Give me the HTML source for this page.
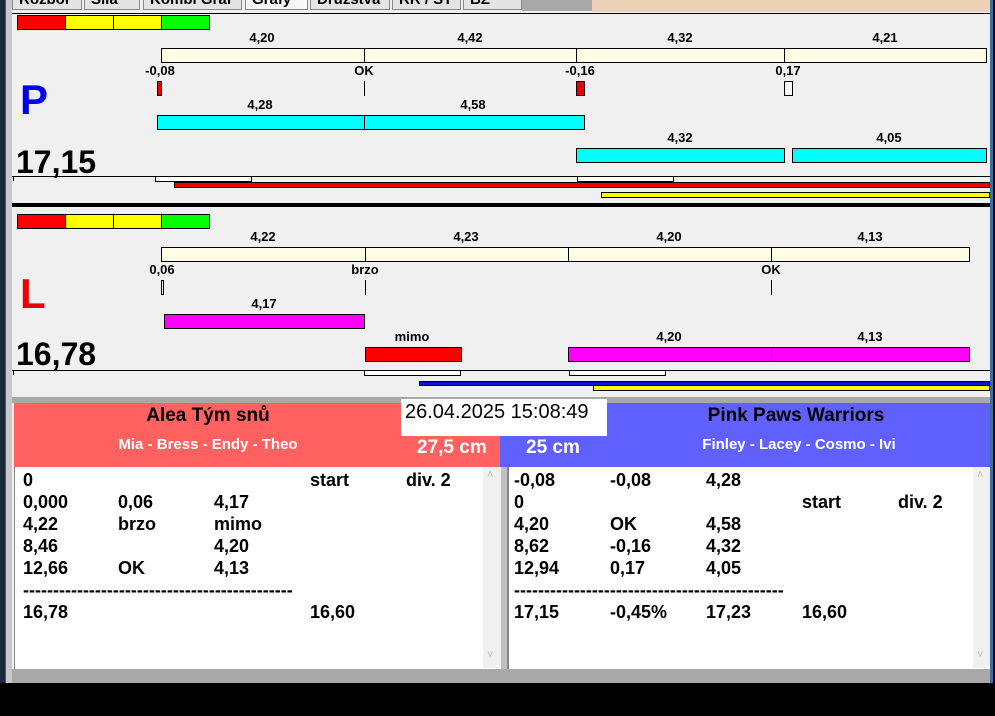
<!DOCTYPE html>
<html><head><meta charset="utf-8"><style>
*{margin:0;padding:0;box-sizing:border-box}
body{width:995px;height:716px;background:#000;position:relative;overflow:hidden;font-family:"Liberation Sans",Arial,sans-serif}
div,span{position:absolute}
.b{border:1px solid #000}
.l{font-weight:bold;font-size:13px;color:#000;transform:translateX(-50%);white-space:nowrap;line-height:14px}
.t{font-weight:bold;font-size:18px;line-height:22px;white-space:nowrap}
.tab{top:-10px;height:20px;background:#e4e4e4;border:1px solid #888;font-size:15px;font-weight:bold;padding:0 6px;line-height:17px;overflow:hidden}
</style></head><body>
<div style="left:0;top:0;width:5px;height:683px;background:#1a2a3a"></div>
<div style="left:5px;top:0;width:986px;height:683px;background:#f0f0f0"></div>
<div style="left:5px;top:0;width:7px;height:683px;background:#c8c8c8;border-left:1px solid #555"></div>
<div style="left:990px;top:0;width:3px;height:683px;background:#3a6ea5"></div>
<div style="left:12px;top:0;width:978px;height:12px;background:#f0f0f0"></div>
<div class="tab" style="left:12px;width:70px">Rozbor</div>
<div class="tab" style="left:84px;width:56px">Síla</div>
<div class="tab" style="left:143px;width:99px">Kombi Graf</div>
<div class="tab" style="left:245px;width:63px;background:#f8f8f8">Grafy</div>
<div class="tab" style="left:310px;width:80px">Družstva</div>
<div class="tab" style="left:392px;width:69px">RR / ST</div>
<div class="tab" style="left:463px;width:59px">BZ</div>
<div style="left:522px;top:0;width:70px;height:11px;background:#a8a8a8"></div>
<div style="left:592px;top:0;width:398px;height:12px;background:#ecd3b8"></div>
<div style="left:12px;top:13px;width:978px;height:1px;background:#000"></div>
<div class="b" style="left:17px;top:15px;width:49px;height:15px;background:#f00"></div>
<div class="b" style="left:65px;top:15px;width:49px;height:15px;background:#ff0"></div>
<div class="b" style="left:113px;top:15px;width:49px;height:15px;background:#ff0"></div>
<div class="b" style="left:161px;top:15px;width:49px;height:15px;background:#0f0"></div>

<div class="b" style="left:161px;top:48px;width:204px;height:15px;background:#fffde6"></div>
<div class="b" style="left:364px;top:48px;width:213px;height:15px;background:#fffde6"></div>
<div class="b" style="left:576px;top:48px;width:209px;height:15px;background:#fffde6"></div>
<div class="b" style="left:784px;top:48px;width:203px;height:15px;background:#fffde6"></div>
<span class="l" style="left:262px;top:31px">4,20</span>
<span class="l" style="left:470px;top:31px">4,42</span>
<span class="l" style="left:680px;top:31px">4,32</span>
<span class="l" style="left:885px;top:31px">4,21</span>
<span class="l" style="left:160px;top:64px">-0,08</span>
<span class="l" style="left:364px;top:64px">OK</span>
<span class="l" style="left:580px;top:64px">-0,16</span>
<span class="l" style="left:788px;top:64px">0,17</span>
<div class="b" style="left:157px;top:81px;width:5px;height:15px;background:#e00"></div>
<div style="left:364px;top:81px;width:1px;height:15px;background:#000"></div>
<div class="b" style="left:576px;top:81px;width:9px;height:15px;background:#e00"></div>
<div class="b" style="left:784px;top:81px;width:9px;height:15px;background:#fff"></div>
<span style="left:20px;top:76px;font-size:42px;font-weight:bold;color:#0000ee;line-height:48px">P</span>
<span class="l" style="left:260px;top:98px">4,28</span>
<span class="l" style="left:473px;top:98px">4,58</span>
<div class="b" style="left:157px;top:115px;width:208px;height:15px;background:#0ff"></div>
<div class="b" style="left:364px;top:115px;width:221px;height:15px;background:#0ff"></div>
<span class="l" style="left:680px;top:131px">4,32</span>
<span class="l" style="left:889px;top:131px">4,05</span>
<div class="b" style="left:576px;top:148px;width:209px;height:15px;background:#0ff"></div>
<div class="b" style="left:792px;top:148px;width:195px;height:15px;background:#0ff"></div>
<span style="left:16px;top:144px;font-size:32px;font-weight:bold;line-height:36px">17,15</span>
<div style="left:12px;top:176px;width:978px;height:1px;background:#000"></div>
<div style="left:13px;top:176px;width:1px;height:5px;background:#000"></div>
<div class="b" style="left:155px;top:176px;width:97px;height:6px;background:#fff"></div>
<div class="b" style="left:577px;top:176px;width:97px;height:6px;background:#fff"></div>
<div class="b" style="left:174px;top:182px;width:816px;height:6px;background:#e00"></div>
<div class="b" style="left:601px;top:192px;width:389px;height:6px;background:#ff0"></div>
<div style="left:12px;top:203px;width:978px;height:4px;background:#000"></div>
<div class="b" style="left:17px;top:214px;width:49px;height:15px;background:#f00"></div>
<div class="b" style="left:65px;top:214px;width:49px;height:15px;background:#ff0"></div>
<div class="b" style="left:113px;top:214px;width:49px;height:15px;background:#ff0"></div>
<div class="b" style="left:161px;top:214px;width:49px;height:15px;background:#0f0"></div>
<div class="b" style="left:161px;top:247px;width:205px;height:15px;background:#fffde6"></div>
<div class="b" style="left:365px;top:247px;width:204px;height:15px;background:#fffde6"></div>
<div class="b" style="left:568px;top:247px;width:204px;height:15px;background:#fffde6"></div>
<div class="b" style="left:771px;top:247px;width:199px;height:15px;background:#fffde6"></div>
<span class="l" style="left:263px;top:230px">4,22</span>
<span class="l" style="left:466px;top:230px">4,23</span>
<span class="l" style="left:669px;top:230px">4,20</span>
<span class="l" style="left:870px;top:230px">4,13</span>
<span class="l" style="left:162px;top:263px">0,06</span>
<span class="l" style="left:365px;top:263px">brzo</span>
<span class="l" style="left:771px;top:263px">OK</span>
<div class="b" style="left:161px;top:280px;width:3px;height:15px;background:#fff"></div>
<div style="left:365px;top:280px;width:1px;height:15px;background:#000"></div>
<div style="left:771px;top:280px;width:1px;height:15px;background:#000"></div>
<span style="left:20px;top:270px;font-size:42px;font-weight:bold;color:#ee0000;line-height:48px">L</span>
<span class="l" style="left:264px;top:297px">4,17</span>
<div class="b" style="left:164px;top:314px;width:201px;height:15px;background:#f0f"></div>
<span class="l" style="left:412px;top:330px">mimo</span>
<span class="l" style="left:669px;top:330px">4,20</span>
<span class="l" style="left:870px;top:330px">4,13</span>
<div class="b" style="left:365px;top:347px;width:97px;height:15px;background:#f00"></div>
<div class="b" style="left:568px;top:347px;width:204px;height:15px;background:#f0f"></div>
<div class="b" style="left:771px;top:347px;width:199px;height:15px;background:#f0f"></div>
<span style="left:16px;top:336px;font-size:32px;font-weight:bold;line-height:36px">16,78</span>
<div style="left:12px;top:370px;width:978px;height:1px;background:#000"></div>
<div style="left:13px;top:370px;width:1px;height:5px;background:#000"></div>
<div class="b" style="left:364px;top:370px;width:97px;height:6px;background:#fff"></div>
<div class="b" style="left:569px;top:370px;width:97px;height:6px;background:#fff"></div>
<div style="left:419px;top:381px;width:571px;height:5px;background:#0018c8;border:1px solid #000"></div>
<div class="b" style="left:593px;top:385px;width:397px;height:6px;background:#ff0"></div>
<div style="left:12px;top:397px;width:978px;height:6px;background:#a8a8a8"></div>
<div style="left:14px;top:403px;width:487px;height:64px;background:#ff6060"></div>
<div style="left:500px;top:403px;width:490px;height:64px;background:#6060ff"></div>
<div style="left:401px;top:399px;width:206px;height:37px;background:#fff"></div>
<span style="left:405px;top:400px;font-size:20px;line-height:24px">26.04.2025 15:08:49</span>
<span style="left:208px;top:404px;transform:translateX(-50%);font-size:19px;font-weight:bold;line-height:24px;white-space:nowrap">Alea Tým snů</span>
<span style="left:208px;top:436px;transform:translateX(-50%);font-size:15px;font-weight:bold;color:#fff;white-space:nowrap">Mia - Bress - Endy - Theo</span>
<span style="left:417px;top:437px;font-size:19px;font-weight:bold;color:#fff;white-space:nowrap">27,5 cm</span>
<span style="left:526px;top:437px;font-size:19px;font-weight:bold;color:#fff;white-space:nowrap">25 cm</span>
<span style="left:796px;top:404px;transform:translateX(-50%);font-size:19px;font-weight:bold;line-height:24px;white-space:nowrap">Pink Paws Warriors</span>
<span style="left:799px;top:436px;transform:translateX(-50%);font-size:15px;font-weight:bold;color:#fff;white-space:nowrap">Finley - Lacey - Cosmo - Ivi</span>
<div style="left:14px;top:467px;width:487px;height:202px;background:#fff;border-left:1px solid #888"></div>
<div style="left:483px;top:467px;width:18px;height:201px;background:#f0f0f0;color:#bbb;font-size:11px;text-align:center"><span style="left:4px;top:2px">˄</span><span style="left:4px;top:182px">˅</span></div>
<div style="left:501px;top:467px;width:6px;height:202px;background:#c0c0c0"></div>
<div style="left:507px;top:467px;width:483px;height:202px;background:#fff;border-left:2px solid #888"></div>
<div style="left:973px;top:467px;width:17px;height:201px;background:#f0f0f0;color:#bbb;font-size:11px;text-align:center"><span style="left:4px;top:2px">˄</span><span style="left:4px;top:182px">˅</span></div>
<div style="left:12px;top:669px;width:978px;height:14px;background:#a8a8a8"></div>

<span class="t" style="left:23px;top:469px">0</span><span class="t" style="left:310px;top:469px">start</span><span class="t" style="left:406px;top:469px">div. 2</span>
<span class="t" style="left:23px;top:491px">0,000</span><span class="t" style="left:118px;top:491px">0,06</span><span class="t" style="left:214px;top:491px">4,17</span>
<span class="t" style="left:23px;top:513px">4,22</span><span class="t" style="left:118px;top:513px">brzo</span><span class="t" style="left:214px;top:513px">mimo</span>
<span class="t" style="left:23px;top:535px">8,46</span><span class="t" style="left:214px;top:535px">4,20</span>
<span class="t" style="left:23px;top:557px">12,66</span><span class="t" style="left:118px;top:557px">OK</span><span class="t" style="left:214px;top:557px">4,13</span>
<span class="t" style="left:23px;top:579px">---------------------------------------------</span>
<span class="t" style="left:23px;top:601px">16,78</span><span class="t" style="left:310px;top:601px">16,60</span>

<span class="t" style="left:514px;top:469px">-0,08</span><span class="t" style="left:610px;top:469px">-0,08</span><span class="t" style="left:706px;top:469px">4,28</span>
<span class="t" style="left:514px;top:491px">0</span><span class="t" style="left:802px;top:491px">start</span><span class="t" style="left:898px;top:491px">div. 2</span>
<span class="t" style="left:514px;top:513px">4,20</span><span class="t" style="left:610px;top:513px">OK</span><span class="t" style="left:706px;top:513px">4,58</span>
<span class="t" style="left:514px;top:535px">8,62</span><span class="t" style="left:610px;top:535px">-0,16</span><span class="t" style="left:706px;top:535px">4,32</span>
<span class="t" style="left:514px;top:557px">12,94</span><span class="t" style="left:610px;top:557px">0,17</span><span class="t" style="left:706px;top:557px">4,05</span>
<span class="t" style="left:514px;top:579px">---------------------------------------------</span>
<span class="t" style="left:514px;top:601px">17,15</span><span class="t" style="left:610px;top:601px">-0,45%</span><span class="t" style="left:706px;top:601px">17,23</span><span class="t" style="left:802px;top:601px">16,60</span>
</body></html>
